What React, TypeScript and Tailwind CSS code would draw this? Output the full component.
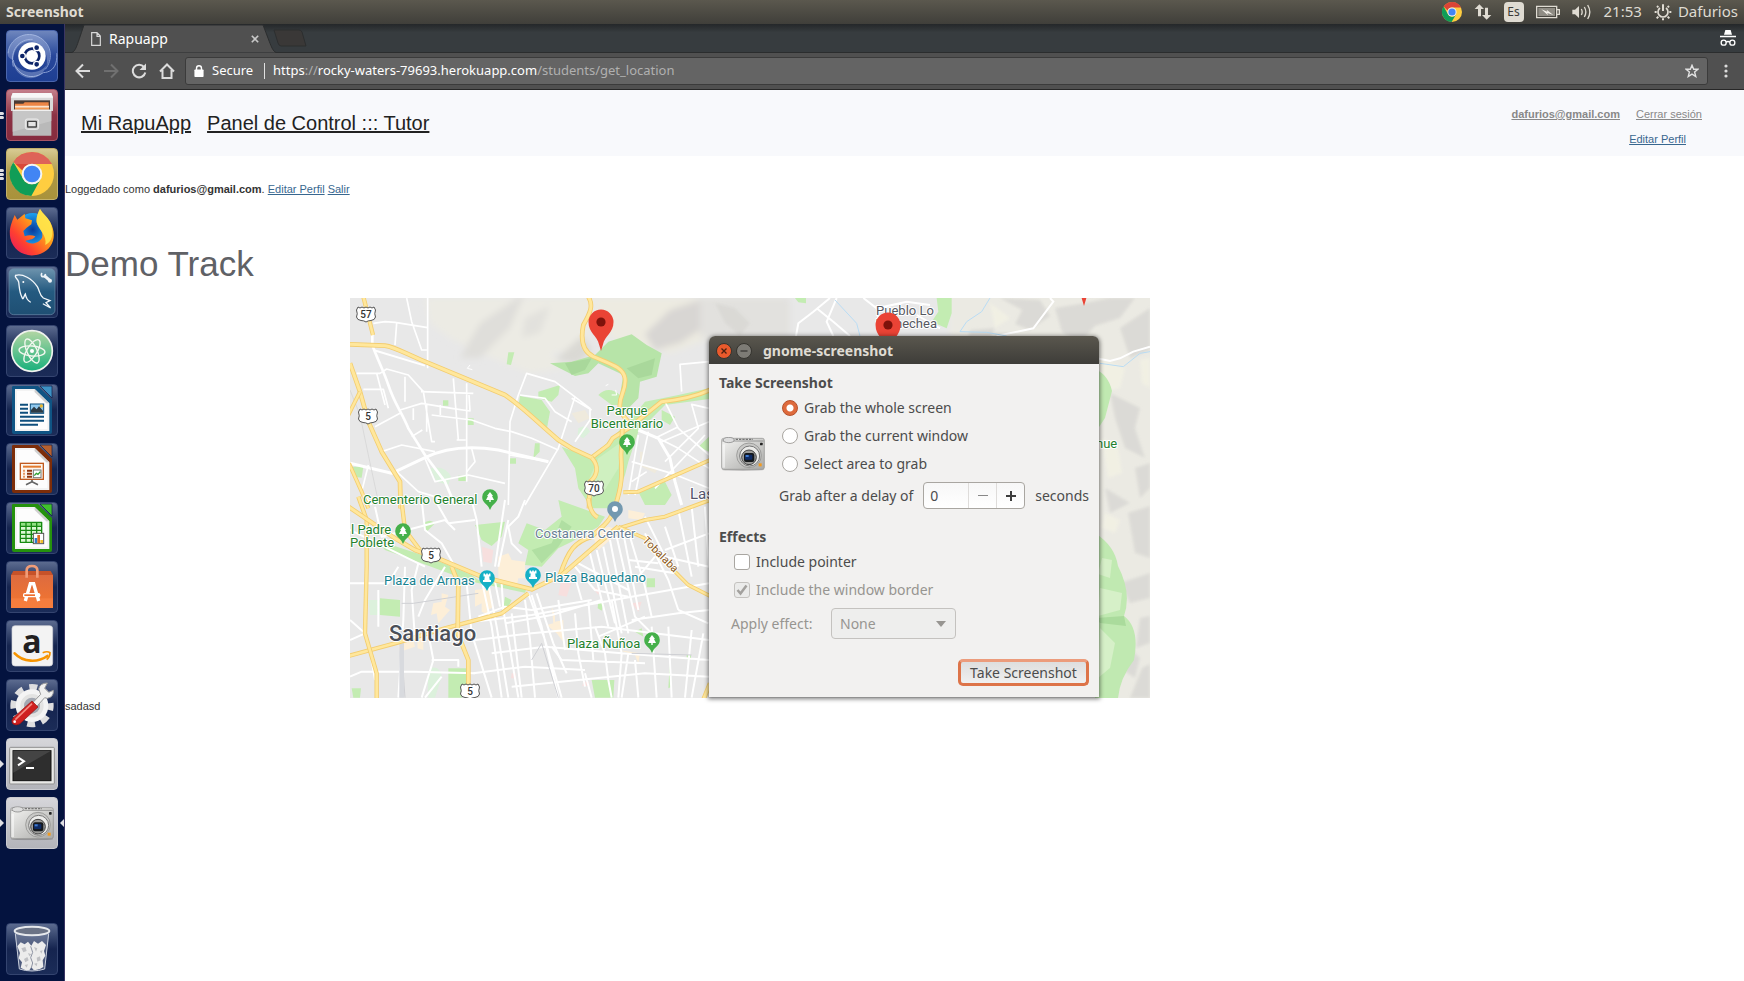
import type { ReactNode } from "react";

const UI = "font-['Noto_Sans','Open_Sans',sans-serif]";

function ChromeLogo({ className }: { className?: string }) {
  return (
    <svg viewBox="0 0 100 100" className={className} aria-hidden="true">
      <circle cx="50" cy="50" r="50" fill="#ffcd40" />
      <path d="M50 0A50 50 0 0 1 95 27H50A23 23 0 0 0 28 43L8 23A50 50 0 0 1 50 0Z" fill="#db4437" />
      <path d="M8 23A50 50 0 0 0 48 100L70 62 A23 23 0 0 1 30 61Z" fill="#0f9d58" />
      <circle cx="50" cy="50" r="23" fill="#f1f1f1" />
      <circle cx="50" cy="50" r="18" fill="#4285f4" />
    </svg>
  );
}

function CameraArt({ className }: { className?: string }) {
  return (
    <svg viewBox="0 0 132 102" className={className} aria-hidden="true">
      <defs>
        <linearGradient id="camBody" x1="0" y1="0" x2="1" y2="1">
          <stop offset="0" stopColor="#f4f4f2" />
          <stop offset="1" stopColor="#a9a9a7" />
        </linearGradient>
      </defs>
      <ellipse cx="66" cy="98" rx="64" ry="4" fill="#000" opacity=".2" />
      <rect x="2" y="4" width="128" height="93" rx="6" fill="url(#camBody)" stroke="#8b8b89" strokeWidth="2" />
      <path d="M4 12H128" stroke="#777" strokeWidth="2" />
      <path d="M44 7H96" stroke="#777" strokeWidth="4" strokeDasharray="7 3" />
      <ellipse cx="23" cy="9" rx="17" ry="8" fill="#ddd" stroke="#777" strokeWidth="2" />
      <rect x="4" y="22" width="8" height="70" fill="#fff" opacity=".5" />
      <circle cx="84" cy="55" r="37" fill="#c9c9c7" stroke="#858583" strokeWidth="2" />
      <circle cx="86" cy="57" r="30" fill="#ececea" stroke="#777" strokeWidth="3" />
      <circle cx="84" cy="61" r="22" fill="#9b9b99" stroke="#444" strokeWidth="3" />
      <rect x="69" y="48" width="31" height="27" rx="6" fill="#15181c" />
      <rect x="72" y="53" width="22" height="15" rx="3" fill="#0e2a63" />
      <rect x="74" y="54" width="9" height="6" fill="#3f7bd0" />
      <rect x="117" y="17" width="8" height="8" rx="2" fill="#222" />
      <rect x="113" y="79" width="9" height="9" fill="#f39a1d" />
    </svg>
  );
}

function OfficeSheet({ dark, light, children }: { dark: string; light: string; children: ReactNode }) {
  return (
    <>
      <path d="M22 6H96L138 48V144Q138 150 132 150H24Q18 150 18 144V10Q18 6 22 6Z" fill={dark} />
      <path d="M102 6H138V42Z" fill={light} stroke="#0a1a45" strokeWidth="2" />
      <path d="M27 15H86L130 58V141H27Z" fill="#f3f3f3" />
      <path d="M33 21H82L124 63V135H33Z" fill="#fdfdfd" />
      <path d="M86 15V24L121 58H130Z" fill="#cfcfcf" />
      {children}
    </>
  );
}

type Item = { name: string; bg: string; marks?: "two" | "three" | "arrow" | "both"; art: ReactNode };

const glass = "bg-linear-to-b from-[#5c6b8f] via-[#15244f] to-[#1b2c58] border-[#34446f]";
const pale = "bg-linear-to-b from-[#d6d6da] to-[#b3b4ba] border-[#c9cad0]";

const items: Item[] = [
  {
    name: "Search your computer",
    bg: "bg-linear-to-b from-[#6f86bd] via-[#28479a] to-[#1e3f93] border-[#4a66ad]",
    art: (
      <>
        <g fill="none" stroke="#a9bce6" opacity=".75">
          <path d="M6 70C8 28 60 -4 104 24C140 48 140 90 118 118" strokeWidth="3" />
          <path d="M22 110C10 60 40 26 80 28" strokeWidth="3" />
          <path d="M22 90C28 130 72 156 112 128C150 126 154 90 152 70" strokeWidth="3" />
        </g>
        <path d="M6 66C14 24 66 -6 108 26C140 56 134 88 122 108C130 60 98 30 66 34C38 38 22 62 22 90C4 84 4 74 6 66Z" fill="#bccbed" opacity=".35" />
        <path d="M20 92C40 132 96 138 122 106C112 140 76 156 46 136C30 124 22 108 20 92Z" fill="#dbe4f8" opacity=".3" />
        <circle cx="78" cy="78" r="41" fill="#fff" />
        <circle cx="78" cy="78" r="22" fill="none" stroke="#0d2468" strokeWidth="8" />
        <g fill="#0d2468" stroke="#fff" strokeWidth="4">
          <circle cx="49" cy="78" r="9" />
          <circle cx="92" cy="53" r="9" />
          <circle cx="92" cy="103" r="9" />
        </g>
      </>
    ),
  },
  {
    name: "Files",
    bg: "bg-linear-to-b from-[#c47f8b] via-[#8c3245] to-[#862b3e] border-[#a85564]",
    marks: "two",
    art: (
      <>
        <path d="M20 12H136L141 24V66H15V24Z" fill="#d9d9d9" />
        <path d="M20 12H136L141 26H15Z" fill="#f7f7f7" />
        <rect x="24" y="34" width="108" height="32" fill="#4a3a33" />
        <path d="M27 44H52L56 40H128V66H27Z" fill="#ed8545" />
        <path d="M27 50H129V56H27Z" fill="#fbe3cd" />
        <path d="M27 56H129V66H27Z" fill="#f39a55" />
        <path d="M20 62H136V140H20Z" fill="#b9b9b9" />
        <path d="M20 62H136V96L20 128Z" fill="#c6c6c6" />
        <path d="M20 64H136" stroke="#efefef" strokeWidth="4" />
        <rect x="58" y="90" width="40" height="31" rx="6" fill="#d2d2d2" stroke="#ececec" strokeWidth="3" />
        <rect x="65" y="97" width="26" height="17" rx="1" fill="#e4e4e4" stroke="#444" strokeWidth="4" />
      </>
    ),
  },
  {
    name: "Google Chrome",
    bg: "bg-linear-to-b from-[#d8cb93] via-[#ad9744] to-[#a9923b] border-[#c2b06a]",
    marks: "three",
    art: (
      <>
        <circle cx="78" cy="78" r="66" fill="#ffcd40" />
        <path d="M78 12A66 66 0 0 1 138 48H78A30 30 0 0 0 50 68L22 42A66 66 0 0 1 78 12Z" fill="#d9483b" />
        <path d="M22 42A66 66 0 0 0 76 144L104 93A30 30 0 0 1 50 90Z" fill="#109d57" />
        <path d="M78 12A66 66 0 0 1 138 48H18A66 66 0 0 1 78 12Z" fill="#fff" opacity=".15" />
        <circle cx="78" cy="78" r="31" fill="#f5f5f5" />
        <circle cx="78" cy="78" r="25" fill="#4285f4" />
      </>
    ),
  },
  {
    name: "Firefox",
    bg: glass,
    art: (
      <>
        <defs>
          <linearGradient id="foxFire" x1="1" y1="0" x2="0" y2="1">
            <stop offset="0" stopColor="#ffe23a" />
            <stop offset=".4" stopColor="#ff9a1a" />
            <stop offset=".7" stopColor="#ff4030" />
            <stop offset="1" stopColor="#e0106a" />
          </linearGradient>
          <radialGradient id="foxGlobe">
            <stop offset="0" stopColor="#0a3a9b" />
            <stop offset="1" stopColor="#1ba2f2" />
          </radialGradient>
        </defs>
        <circle cx="80" cy="68" r="50" fill="url(#foxGlobe)" />
        <path d="M26 24L34 38L56 20L58 34L78 40L76 52L62 62L52 72L56 88C66 84 78 84 88 88C82 100 64 98 58 102C74 116 100 108 108 92C114 72 96 60 92 46C90 28 98 14 102 6C110 20 122 28 132 44C154 82 144 124 104 140C64 156 22 134 13 94C9 70 12 58 26 24Z" fill="url(#foxFire)" />
        <path d="M102 6C110 20 122 28 132 44C146 80 138 104 118 114C124 84 96 68 92 46C90 28 98 14 102 6Z" fill="#ffe94e" opacity=".85" />
      </>
    ),
  },
  {
    name: "MySQL Workbench",
    bg: glass,
    art: (
      <>
        <defs>
          <linearGradient id="sqlBg" x1="0" y1="0" x2="0" y2="1">
            <stop offset="0" stopColor="#6d93ad" />
            <stop offset=".5" stopColor="#245a80" />
            <stop offset="1" stopColor="#1f4f73" />
          </linearGradient>
        </defs>
        <rect x="9" y="8" width="138" height="138" rx="14" fill="url(#sqlBg)" stroke="#6d8dab" strokeWidth="2" />
        <g fill="none" stroke="#f2f7fb" strokeWidth="4" strokeLinecap="round">
          <path d="M29 28C50 22 78 38 94 62C102 76 100 88 112 96L132 104L120 110L134 126L112 114" />
          <path d="M29 28C24 34 36 38 38 48C40 62 40 80 48 94C52 106 54 88 58 84C60 96 66 104 73 108" />
        </g>
        <circle cx="52" cy="48" r="3" fill="#fff" />
        <path d="M114 28L132 44" stroke="#eef4f8" strokeWidth="9" />
        <circle cx="112" cy="26" r="6" fill="none" stroke="#eef4f8" strokeWidth="5" strokeDasharray="28 10" strokeDashoffset="-32" />
        <circle cx="132" cy="44" r="6" fill="#eef4f8" />
      </>
    ),
  },
  {
    name: "Atom",
    bg: glass,
    art: (
      <>
        <defs>
          <linearGradient id="atomBg" x1="0" y1="0" x2="0" y2="1">
            <stop offset="0" stopColor="#b4d6a4" />
            <stop offset="1" stopColor="#18b07b" />
          </linearGradient>
        </defs>
        <circle cx="78" cy="78" r="61" fill="url(#atomBg)" stroke="#f0f3ee" strokeWidth="5" />
        <g fill="none" stroke="#f2f7ef" strokeWidth="4">
          <ellipse cx="78" cy="78" rx="39" ry="15" transform="rotate(5 78 78)" />
          <ellipse cx="78" cy="78" rx="39" ry="15" transform="rotate(65 78 78)" />
          <ellipse cx="78" cy="78" rx="39" ry="15" transform="rotate(122 78 78)" />
        </g>
        <circle cx="78" cy="78" r="6" fill="#fff" />
      </>
    ),
  },
  {
    name: "LibreOffice Writer",
    bg: glass,
    art: (
      <OfficeSheet dark="#0f5484" light="#3d91c4">
        <path d="M42 62H66M42 74H66M42 86H66M42 98H114M42 110H114M42 122H96" stroke="#0f4f7d" strokeWidth="6" />
        <rect x="73" y="60" width="40" height="28" fill="#8fc8ee" stroke="#0f4f7d" strokeWidth="3" />
        <circle cx="106" cy="66" r="5" fill="#ecb62e" />
        <path d="M75 86V78L84 68L92 76L99 67L111 80V86Z" fill="#2d3b44" />
      </OfficeSheet>
    ),
  },
  {
    name: "LibreOffice Impress",
    bg: glass,
    art: (
      <OfficeSheet dark="#7d2d09" light="#b6602f">
        <rect x="43" y="61" width="69" height="48" fill="#fdf6ef" stroke="#c05a1f" strokeWidth="4" />
        <path d="M51 71H105" stroke="#e27a2e" strokeWidth="6" />
        <path d="M51 83H57M51 92H57M51 101H57" stroke="#e79a66" strokeWidth="6" />
        <path d="M63 83H78M63 92H78M63 101H78" stroke="#8e350e" strokeWidth="6" />
        <rect x="82" y="81" width="23" height="23" fill="#fff" stroke="#777" strokeWidth="3" />
        <path d="M85 98L91 91L96 94L103 86" stroke="#2fa032" strokeWidth="4" fill="none" />
        <path d="M78 111V116L60 125M78 116L96 125" stroke="#666" strokeWidth="5" fill="none" />
      </OfficeSheet>
    ),
  },
  {
    name: "LibreOffice Calc",
    bg: glass,
    art: (
      <OfficeSheet dark="#25920d" light="#3fc22b">
        <rect x="42" y="60" width="66" height="62" fill="#dcf8d4" />
        <path d="M42 60H108V72H42Z" fill="#5fcf4d" opacity=".6" />
        <path d="M43 60V122M60 60V122M76 60V122M92 60V122M107 60V122M42 61H108M42 73H108M42 85H108M42 97H108M42 109H108M42 121H108" stroke="#178a12" strokeWidth="4" />
        <rect x="82" y="94" width="31" height="31" fill="#fff" stroke="#555" strokeWidth="3" />
        <path d="M90 123V108" stroke="#2e7cc9" strokeWidth="8" />
        <path d="M98 123V99" stroke="#dd6f25" strokeWidth="8" />
        <path d="M107 123V114" stroke="#f0c02c" strokeWidth="8" />
      </OfficeSheet>
    ),
  },
  {
    name: "Ubuntu Software",
    bg: glass,
    art: (
      <>
        <defs>
          <linearGradient id="bagBg" x1="0" y1="0" x2="0" y2="1">
            <stop offset="0" stopColor="#dd6b3f" />
            <stop offset="1" stopColor="#f4762f" />
          </linearGradient>
        </defs>
        <path d="M22 30H134L141 42H15Z" fill="#c65229" />
        <path d="M15 42H141V141H15Z" fill="url(#bagBg)" />
        <path d="M15 112H141V141H15Z" fill="#f9854a" opacity=".5" />
        <path d="M62 50V28Q62 15 78 15T94 28V50" fill="none" stroke="#f09c78" strokeWidth="8" />
        <path d="M58 120L73 68H83L98 120M62 102H94" fill="none" stroke="#fff" strokeWidth="10" />
        <rect x="51" y="96" width="52" height="13" rx="5" fill="#fff" />
        <rect x="55" y="100" width="32" height="5" fill="#ef6d2c" />
      </>
    ),
  },
  {
    name: "Amazon",
    bg: glass,
    art: (
      <>
        <rect x="18" y="17" width="122" height="121" rx="9" fill="#f3f3f3" stroke="#d3d4da" strokeWidth="2" />
        <text x="78" y="99" textAnchor="middle" fontSize="96" fontWeight="700" fill="#221f1f" fontFamily="Open Sans, sans-serif">a</text>
        <path d="M26 100C52 128 96 128 124 108" fill="none" stroke="#f79400" strokeWidth="8" strokeLinecap="round" />
        <path d="M110 98C120 94 128 95 132 98C132 106 128 114 122 119" fill="none" stroke="#f79400" strokeWidth="5" />
      </>
    ),
  },
  {
    name: "System Settings",
    bg: glass,
    art: (
      <>
        <circle cx="78" cy="80" r="56" fill="none" stroke="#dededf" strokeWidth="18" strokeDasharray="24 20" strokeDashoffset="10" />
        <circle cx="78" cy="80" r="42" fill="#e3e3e2" stroke="#f4f4f4" strokeWidth="14" />
        <circle cx="78" cy="80" r="24" fill="#a3a8b2" />
        <path d="M66 86L104 46L98 30Q102 12 124 12L116 28L128 40L142 34Q144 54 124 58L116 56L78 98Z" fill="#f0f0ef" stroke="#9a9a9a" strokeWidth="3" />
        <path d="M78 66L96 84L42 134Q30 142 20 134Q14 126 22 116Z" fill="#cf2020" stroke="#8e1212" strokeWidth="2" />
        <path d="M78 74L28 122" stroke="#f38a80" strokeWidth="5" />
        <circle cx="26" cy="128" r="4" fill="#fff" />
      </>
    ),
  },
  {
    name: "Terminal",
    bg: pale,
    marks: "arrow",
    art: (
      <>
        <rect x="11" y="28" width="134" height="110" rx="3" fill="#e9e9e7" stroke="#8f8f8f" strokeWidth="3" />
        <rect x="21" y="38" width="114" height="90" fill="#2e2e2e" stroke="#111" strokeWidth="3" />
        <path d="M22 39H134L22 104Z" fill="#444" />
        <path d="M36 58L54 70L36 82" fill="none" stroke="#fff" strokeWidth="6" />
        <path d="M60 90H84" stroke="#fff" strokeWidth="6" />
      </>
    ),
  },
  {
    name: "Camera",
    bg: pale,
    marks: "both",
    art: (
      <svg x="12" y="28" width="132" height="102">
        <CameraArt />
      </svg>
    ),
  },
];

const trash: Item = {
  name: "Trash",
  bg: glass,
  art: (
    <>
      <path d="M26 28H130L116 138Q78 150 40 138Z" fill="#c9d0de" opacity=".3" />
      <path d="M34 70L44 58L56 64L66 56L76 68L84 54L96 62L108 54L120 66L114 84L118 98L110 112L112 132Q96 144 82 140L76 132L70 142Q54 142 44 134L48 118L38 106L42 90Z" fill="#ececec" />
      <path d="M46 76L58 72L62 84L52 88ZM84 72L94 76L90 86ZM54 108L64 102L68 112L58 118ZM92 104L102 100L104 112L94 116ZM66 90L76 94L70 100ZM84 122L94 120L92 130ZM56 126L66 124L62 134ZM102 84L110 82L106 92Z" fill="#bfc0c4" />
      <path d="M74 70L80 88L74 104L80 120L76 134" fill="none" stroke="#8d93a3" strokeWidth="3" />
      <ellipse cx="78" cy="24" rx="52" ry="13" fill="#6b7386" stroke="#e6e8ec" strokeWidth="6" />
      <path d="M28 32L40 138Q78 150 116 138L128 32" fill="none" stroke="#c8cedb" strokeWidth="3" />
    </>
  ),
};

function Tile({ item }: { item: Item }) {
  return (
    <li className="relative pl-1.5">
      {(item.marks === "two" || item.marks === "three") && (
        <span className="absolute left-0 top-0 flex h-full flex-col justify-center gap-px">
          <span className="h-[3px] w-1 rounded-r-sm bg-[#dfdfe3]" />
          <span className="h-[3px] w-1 rounded-r-sm bg-[#dfdfe3]" />
          {item.marks === "three" && <span className="h-[3px] w-1 rounded-r-sm bg-[#dfdfe3]" />}
        </span>
      )}
      {(item.marks === "arrow" || item.marks === "both") && (
        <svg viewBox="0 0 4 8" className="absolute left-0 top-[22px] h-2 w-1" aria-hidden="true">
          <path d="M0 0L4 4L0 8Z" fill="#dfdfe3" />
        </svg>
      )}
      {item.marks === "both" && (
        <svg viewBox="0 0 4 8" className="absolute right-0 top-[22px] h-2 w-1" aria-hidden="true">
          <path d="M4 0L0 4L4 8Z" fill="#dfdfe3" />
        </svg>
      )}
      <button type="button" aria-label={item.name} className={`block size-[52px] rounded-[4px] border ${item.bg}`}>
        <svg viewBox="3 3 150 150" className="size-full overflow-visible" aria-hidden="true">{item.art}</svg>
      </button>
    </li>
  );
}

function TopBar() {
  return (
    <header className={`${UI} flex h-6 shrink-0 items-center bg-linear-to-b from-[#5b584e] to-[#403f3a] px-1.5 text-sm text-[#dfdbd2]`}>
      <span className="font-bold">Screenshot</span>
      <div className="ml-auto flex items-center">
        <ChromeLogo className="mr-3 size-5" />
        <svg viewBox="0 0 54 54" className="mr-3 size-[18px]" fill="#dfdbd2" aria-hidden="true">
          <path d="M16 4L30 18H21V40H12V18H2ZM38 50L24 36H33V14H42V36H52Z" />
        </svg>
        <span className="mr-3 flex size-5 items-center justify-center rounded-sm bg-[#dfdbd2] text-[12px] text-[#3c3b37]">Es</span>
        <svg viewBox="0 0 72 42" className="mr-3 h-3.5 w-6" fill="none" aria-hidden="true">
          <path d="M2 4H62V38H2ZM62 14H70V28H62" stroke="#dfdbd2" strokeWidth="4" />
          <rect x="7" y="9" width="50" height="24" fill="#8f8c84" />
          <path d="M16 13L34 20L32 14L52 30L34 24L36 31Z" fill="#f2efe8" />
        </svg>
        <svg viewBox="0 0 60 54" className="mr-3 h-[18px] w-5" fill="none" stroke="#dfdbd2" strokeWidth="4" aria-hidden="true">
          <path d="M1 20H9L21 9V45L9 34H1Z" fill="#dfdbd2" stroke="none" />
          <path d="M28 18Q33 27 28 36M37 12Q46 27 37 42M47 6Q60 27 47 48" />
        </svg>
        <time className="mr-3 text-[15px]">21:53</time>
        <svg viewBox="0 0 54 54" className="mr-1.5 size-[18px]" fill="none" stroke="#dfdbd2" aria-hidden="true">
          <path d="M18 15A15 15 0 1 0 36 15" strokeWidth="5" />
          <path d="M27 4V24M46 27H52M2 27H8M41 41L46 46M13 41L8 46M41 13L45 9M13 13L9 9M27 46V52" strokeWidth="6" />
        </svg>
        <span className="text-[15px]">Dafurios</span>
      </div>
    </header>
  );
}

function BrowserChrome() {
  return (
    <div className={`${UI} text-white`}>
      <div className="flex h-[29px] items-stretch border-b border-[#2b2d2e] bg-linear-to-b from-[#242729] via-[#373c3f] via-30% to-[#373c3f]">
        <div className="relative ml-1.5 flex w-[206px] items-center pl-5 pt-0.5">
          <svg viewBox="0 0 206 29" preserveAspectRatio="none" className="absolute inset-x-0 top-0 h-[29px] w-full" aria-hidden="true">
            <path d="M0 29C5 27 5 24 13 1H192C201 24 201 27 206 29Z" fill="#505050" stroke="#2b2d2e" />
          </svg>
          <svg viewBox="0 0 30 42" className="relative h-3.5 w-2.5" fill="none" stroke="#d8d8d8" strokeWidth="3.5" aria-hidden="true">
            <path d="M2 2H18L28 12V40H2ZM18 2V13H28" />
          </svg>
          <span className="relative ml-2 text-sm">Rapuapp</span>
          <button type="button" aria-label="Close tab" className="relative ml-auto mr-[18px]">
            <svg viewBox="0 0 10 10" className="size-2" stroke="#c8c8c8" strokeWidth="2" aria-hidden="true">
              <path d="M1 1L9 9M9 1L1 9" />
            </svg>
          </button>
        </div>
        <button type="button" aria-label="New tab" className="-ml-1 self-center">
          <svg viewBox="0 0 34 18" className="h-[18px] w-[34px]" aria-hidden="true">
            <path d="M1 1H26Q28 1 29 3L33 17H8Q6 17 5 14Z" fill="#3a3837" stroke="#2c2e2f" />
          </svg>
        </button>
        <svg viewBox="0 0 48 48" className="ml-auto mr-2 size-4 self-center" aria-hidden="true">
          <path d="M12 14L16 0H32L36 14ZM0 17H48V22H0Z" fill="#fff" />
          <circle cx="11" cy="38" r="7.5" fill="none" stroke="#fff" strokeWidth="4" />
          <circle cx="37" cy="38" r="7.5" fill="none" stroke="#fff" strokeWidth="4" />
          <path d="M18 37Q24 32 30 37" fill="none" stroke="#fff" strokeWidth="4" />
        </svg>
      </div>
      <div className="flex h-[37px] items-center border-b border-[#272727] bg-[#505050] pl-2.5 pr-2">
        <button type="button" aria-label="Back" className="mr-3">
          <svg viewBox="0 0 16 16" className="size-4" fill="none" stroke="#dcdcdc" strokeWidth="2" aria-hidden="true"><path d="M15 8H2M8 1.5L1.5 8L8 14.5" /></svg>
        </button>
        <button type="button" aria-label="Forward" className="mr-3">
          <svg viewBox="0 0 16 16" className="size-4" fill="none" stroke="#707070" strokeWidth="2" aria-hidden="true"><path d="M1 8H14M8 1.5L14.5 8L8 14.5" /></svg>
        </button>
        <button type="button" aria-label="Reload" className="mr-3">
          <svg viewBox="0 0 16 16" className="size-4" aria-hidden="true"><path d="M13 4A6.3 6.3 0 1 0 14.3 9.5" fill="none" stroke="#dcdcdc" strokeWidth="2" /><path d="M15 .5V7H8.500Z" fill="#dcdcdc" /></svg>
        </button>
        <button type="button" aria-label="Home" className="mr-2.5">
          <svg viewBox="0 0 16 16" className="size-4" fill="none" stroke="#dcdcdc" strokeWidth="2" aria-hidden="true"><path d="M1 8.500L8 1.500L15 8.500M3.500 7V15H12.500V7" /></svg>
        </button>
        <div className="flex h-7 flex-1 items-center rounded-[3px] border border-[#3b3b3b] bg-[#646464] px-2 text-[13px]">
          <svg viewBox="0 0 26 34" className="mr-2 h-3 w-[10px]" aria-hidden="true">
            <rect y="13" width="26" height="21" rx="2" fill="#fff" />
            <path d="M6 14V9Q6 2 13 2T20 9V14" fill="none" stroke="#fff" strokeWidth="4" />
          </svg>
          <span className="w-[44px]">Secure</span>
          <span className="mx-2 h-4 w-px bg-[#e0e0e0]" />
          <p className="flex-1 text-[#b0b0b0]">
            <span className="text-white">https</span>://<span className="text-white">rocky-waters-79693.herokuapp.com</span>/students/get_location
          </p>
          <button type="button" aria-label="Bookmark">
            <svg viewBox="0 0 16 16" className="size-3.5" fill="none" stroke="#e2e2e2" strokeWidth="1.600" aria-hidden="true">
              <path d="M8 1.500L9.900 6H14.800L11 9.200L12.300 14.300L8 11.500L3.700 14.300L5 9.200L1.200 6H6.100Z" />
            </svg>
          </button>
        </div>
        <button type="button" aria-label="Menu" className="ml-4 mr-2">
          <svg viewBox="0 0 4 14" className="h-3.5 w-1" fill="#dcdcdc" aria-hidden="true">
            <circle cx="2" cy="2" r="1.600" /><circle cx="2" cy="7" r="1.600" /><circle cx="2" cy="12" r="1.600" />
          </svg>
        </button>
      </div>
    </div>
  );
}

function Road({ d, w = 9 }: { d: string; w?: number }) {
  return (
    <>
      <path d={d} fill="none" stroke="#f3cd6f" strokeWidth={w + 5} strokeLinejoin="round" />
      <path d={d} fill="none" stroke="#ffe79c" strokeWidth={w} strokeLinejoin="round" />
    </>
  );
}

function Pin({ x, y, color, kind }: { x: number; y: number; color: string; kind: "tree" | "tower" | "dot" }) {
  return (
    <g transform={`translate(${x} ${y})`}>
      <path d="M0 13L-1.500 10C-3 7-7.800 5.500-7.800 0A7.800 7.800 0 0 1 7.800 0C7.800 5.500 3 7 1.500 10Z" fill={color} />
      {kind === "tree" && <path d="M0-5L3-1H2L4 3H.7V5H-.7V3H-4L-2-1H-3Z" fill="#fff" />}
      {kind === "tower" && <path d="M-3.500-4.500H-2V-3.500H-.8V-4.500H.8V-3.500H2V-4.500H3.500V-1.500H2.200L2.700 2H4V4H-4V2H-2.700L-2.200-1.500H-3.500Z" fill="#fff" />}
      {kind === "dot" && <circle r="3" fill="#fff" />}
    </g>
  );
}

function RedPin({ x, y }: { x: number; y: number }) {
  return (
    <g transform={`translate(${x} ${y})`}>
      <path d="M0 29L-1.800 23C-4 13-12.500 11-12.500 0A12.500 12.500 0 0 1 12.500 0C12.500 11 4 13 1.800 23Z" fill="#ea4335" />
      <circle r="4.600" fill="#7d120b" />
    </g>
  );
}

function Shield({ x, y, n }: { x: number; y: number; n: string }) {
  return (
    <g transform={`translate(${x} ${y})`}>
      <path d="M-8-7Q-6-5-4-7Q-2-5 0-7Q2-5 4-7Q6-5 8-7L9.500-4Q8 0 9.500 3Q9 6 5 6.500Q2 6.500 0 8Q-2 6.500-5 6.500Q-9 6-9.500 3Q-8 0-9.500-4Z" fill="#fff" stroke="#555" />
      <text y="4" textAnchor="middle" fontSize="10" fontWeight="500" fill="#333">{n}</text>
    </g>
  );
}

const halo = { paintOrder: "stroke" as const, stroke: "#fff", strokeWidth: 2, strokeLinejoin: "round" as const };

function CityMap() {
  return (
    <svg viewBox="0 0 800 400" className="block h-[400px] w-[800px]" fontFamily="Roboto, sans-serif" role="img" aria-label="Map">
      <defs>
        <filter id="soft" x="-10%" y="-10%" width="120%" height="120%"><feGaussianBlur stdDeviation="3" /></filter>
        <filter id="softer" x="-10%" y="-10%" width="120%" height="120%"><feGaussianBlur stdDeviation="1.500" /></filter>
      </defs>
      <rect width="800" height="400" fill="#e8e8e8" />

      {/* hills */}
      <g filter="url(#soft)">
        <path d="M75 0H245L235 50L200 55L215 70L180 75L130 55L100 40L80 25Z" fill="#ecebe4" />
        <path d="M110 60L130 25L175 -5L160 30L130 60Z" fill="#dfdeda" />
        <path d="M175 20L200 8L190 35L172 40Z" fill="#e2e1dd" />
        <path d="M245 0H360V40L320 55L270 45L250 30Z" fill="#edebe1" />
        <path d="M295 36L320 12L350 2L360 25L330 45L305 52Z" fill="#d8d6d3" />
        <path d="M205 62L232 38L242 52L228 66Z" fill="#dad9d4" />
        <path d="M350 0H440V40H350Z" fill="#e2e1de" />
        <path d="M600 -10H810V410H745V60L600 40Z" fill="#ebeae3" />
      </g>
      <g fill="#d9d8d4" opacity=".85" filter="url(#softer)">
        <path d="M650 0L690 2L700 18L680 32L665 26L672 12ZM705 10L735 5L760 0H785L770 20L745 28L730 45L712 34ZM770 30L800 10V52L780 60ZM760 95L790 110L785 130L795 160L775 150L765 120ZM785 170L800 165V190L790 200ZM755 190L780 205L760 215ZM778 215L800 208V260L785 255ZM770 285L800 275V300L780 305ZM790 320L800 318V345L786 350ZM775 345L790 360L785 380L770 370ZM792 370L800 366V400H780Z" />
        <path d="M365 5L385 10L400 25L390 38L375 25ZM620 32L645 30L640 40H618Z" />
      </g>
      <g fill="#f2f1e4" opacity=".9" filter="url(#softer)">
        <path d="M750 60L775 70L770 90L750 95ZM752 140L768 150L772 175L758 180ZM755 215L770 222L765 235L752 230ZM640 5L660 20L645 30ZM790 62L800 60V90L792 85Z" />
      </g>
      <path d="M742 70Q758 75 762 93L755 120L745 135ZM745 235Q765 248 768 268Q782 295 774 318Q790 330 784 362Q770 380 768 400H745Z" fill="#c0e9b1" />
      <path d="M750 290L772 295L770 312L748 318ZM750 330L765 345L760 370L748 380ZM752 260L762 262L760 280L748 276Z" fill="#d6f0c8" />
      <path d="M746 320L774 318L776 328L750 325Z" fill="#aadb9c" />

      {/* north-west quarter */}
      <g transform="translate(-5 -3) scale(.33333)">
        <g fill="#c3ecb2">
          <path d="M615 205L680 200L750 180L790 140L860 118L905 150L950 175L935 245L885 260L880 310L830 360L825 300L835 240L760 205L730 235L690 243Z" fill="#b7e4a8" />
          <path d="M660 205L740 190L720 225L680 240ZM845 220L930 190L920 240L880 250Z" fill="#a9d89b" />
          <path d="M525 303L590 315L615 350L605 405L520 335ZM580 290L645 270L640 300L620 320L580 310ZM490 172L508 172L498 210L485 208ZM760 300Q790 270 825 300L830 330H800ZM294 316H310V332H294ZM368 370H386V390H368ZM15 515L55 515L50 548L25 545ZM340 542H364V558H340ZM495 490H513V506H495ZM570 445H584V470L565 490Z" />
          <path d="M650 455L740 490L800 430L860 370L900 320L1000 300L1092 280L1092 312L960 330L880 410L850 500L840 540L800 640L740 640L700 580L690 520Z" />
          <path d="M950 345L990 365L975 390L950 375ZM1092 425L1060 455L1092 470ZM880 590L960 560L980 600L960 630L900 630Z" />
          <path d="M700 400Q725 385 735 410L715 430L698 420ZM255 520Q300 510 318 545L310 570L275 560Z" fill="#dcf1dc" />
        </g>
        <path d="M760 490L830 440L820 520L770 600L720 580Z" fill="#cff0c0" />
        <path d="M680 355L720 345L735 370L700 385ZM885 470H893V500H885ZM880 510L940 520L930 535Z" fill="#efeadd" />
        <g fill="none" stroke="#fff" strokeWidth="5" strokeLinejoin="round">
          <path d="M185 9L200 80L230 165H250M248 9V220M85 85L120 80L150 82L248 98M155 85L150 150M35 235H105L125 222L190 240L235 290L260 440H270M180 245V320M228 290L385 295M165 345L230 325L320 340L375 348L372 300M260 360L380 375L450 400L500 410L560 430L640 465M90 395L165 355M245 330V410M325 250L340 435M365 265V560M335 435H362M200 425L232 405M55 283H115L130 340M95 235L120 330M286 330V360M205 340V375" />
          <path d="M490 630L495 380L520 300L545 235L630 260L735 340L735 375L690 440M525 300L600 310L630 350L680 380M690 305L640 460L540 630M610 500L495 480M680 310L740 345" />
          <path d="M1092 200L1005 208L1010 290M960 320L1000 400L1092 480M1092 340L1040 328L1060 400L960 500M1092 380L950 440M860 500L980 535L1092 580M1000 395L930 430M880 420L850 600M910 410L870 600M1080 420L930 580M905 530L860 560M940 430L1000 460L1092 520" />
          <path d="M155 530L220 590L320 620M240 490L270 560L370 540L480 565M380 460L390 500L365 530M70 510L50 590L80 630M110 470L170 450L270 470" />
          <path d="M375 210L367 220L382 224M790 268L782 272M800 300L815 300L812 285" strokeWidth="3" />
        </g>
        <g fill="none" stroke="#fff" strokeWidth="9" strokeLinejoin="round">
          <path d="M82 120V150C100 200 115 225 130 270C150 330 170 350 190 400L240 480L300 560L330 630" strokeWidth="8" />
          <path d="M15 505L140 535L240 488C300 458 380 452 460 465L610 500M880 405L940 430L975 490L990 560L1010 630" />
          <path d="M85 165L240 212" strokeWidth="6" />
        </g>
        <path d="M15 285L45 360L70 480L100 620" stroke="#d2d2d2" strokeWidth="2" fill="none" />
        <Road d="M55 5L84 120" w={8} />
        <Road d="M15 205L45 290L70 380L110 470L165 560L167 640" />
        <Road d="M45 290L10 360" w={7} />
        <Road d="M12 505L50 590L70 640" w={7} />
        <Road d="M730 5C745 30 738 50 715 90C705 140 715 170 745 185C790 205 835 215 840 250C845 290 820 300 825 340C830 370 860 380 860 400" />
        <Road d="M740 488L790 450L803 430L850 400L950 320C1000 315 1050 305 1095 285" />
        <Road d="M832 400L828 480C830 530 835 560 810 635" />
        <Road d="M835 592L880 590L970 550L1095 495" w={7} />
        <Road d="M740 488C765 515 755 545 735 560L732 640" />
        <Road d="M12 148L120 152C150 156 180 175 240 200L480 300C510 320 540 345 600 400L640 435L680 460L740 488" />
      </g>

      {/* south-west quarter */}
      <g transform="translate(-5 202) scale(.33333)">
        <g fill="#c3ecb2">
          <path d="M640 0L780 50L760 80L680 125L640 145L590 200L540 195L550 150L520 130L545 70L600 90L650 50Z" />
          <path d="M560 150L620 130L650 60L680 80L640 140L590 190Z" fill="#b0dfa2" />
          <path d="M390 75L480 65L470 110L440 138L410 120ZM95 120L260 175L380 225L400 240L545 265L540 278L380 245L230 190L120 150ZM105 295L165 300L165 350L105 345ZM310 505H372L370 560L350 593H310ZM740 540H808L805 593H750ZM20 565H48L45 593H25ZM235 70Q255 55 270 70L245 95ZM760 300L775 310L770 332L758 325ZM480 290L500 300L490 320L475 325ZM870 395L890 385L895 410ZM1025 465H1038V478H1025ZM905 235H930V262H905ZM975 480L980 560L970 565Z" />
          <path d="M70 300H105V345H75ZM255 505Q285 495 290 530L270 593H250Q245 540 255 505Z" fill="#dcf1dc" />
        </g>
        <g fill="#fdefd8">
          <path d="M460 170L490 160L500 180L540 185V235H520L515 260L460 235ZM390 270L435 265L445 320L430 330V345L410 335V310L390 320ZM265 310L290 305V280L310 285L300 320L315 330L280 370L275 340L258 345ZM620 320L630 345V365L655 360V425L635 400L605 375L625 370ZM850 30L900 40L890 60L850 55ZM215 395L235 400V450L218 445ZM740 100L790 80L830 90L760 150ZM820 450L885 460L880 490L870 465ZM160 435L205 420L210 440L165 455Z" />
        </g>
        <path d="M410 140L445 150L440 190L415 185ZM650 235L680 245L665 290L640 285ZM740 260L765 268L760 285ZM860 310L890 305L880 335ZM500 520H512V535H498ZM715 545H732V558H712Z" fill="#f7dfde" />
        <g fill="none" stroke="#fff" strokeWidth="6" strokeLinejoin="round">
          <path d="M230 0L240 90L290 130L330 200M380 0L395 60L410 200M270 0L310 70L390 60M90 20L110 110L300 60L330 90M480 0L450 200M490 60L460 200M540 0L520 50L490 80L500 130L530 160M15 90L220 190L240 200M15 250H130L160 200M60 250V300M15 360L60 400" />
          <path d="M410 240L440 380L470 593M430 250L455 380L490 593M450 245L465 320M470 250L475 330L520 593M365 250L380 400L440 593M550 280L600 420L650 593M575 280L625 430L665 520M560 285L590 380L640 593M540 300L555 420L570 593M500 340L530 593M300 200L240 300L220 350M220 190L200 270L210 420M180 200L175 360L160 593M260 480H340V500M100 380L100 270" />
          <path d="M345 370L560 345L860 290L1092 250M480 370L620 345L770 300M390 420L560 400L770 380L1092 420M440 460L600 440L830 460L1092 480M385 520L540 500L720 510M500 560L900 520L1092 530M620 440L650 480L900 490M720 520L740 593M690 340L700 460L720 560M640 300L660 450M730 300L745 480M750 380L780 460L790 540L800 593M800 300L830 460L820 593M850 460L830 593M870 480L880 593M920 380L935 593M970 380L980 593M1000 330L1090 370M1040 390L1020 593M1075 400L1040 593" />
          <path d="M735 160L790 380M755 150L810 370M775 140L830 400M795 120L850 400M815 110L870 350L920 400M835 100L880 330M855 110L900 260L920 350M690 200L750 270L850 290M700 190L850 270M690 230L710 300M900 100L970 240L1000 330M930 170L880 230M900 50L960 170L1092 200M960 80L1000 200M1000 30L1040 230M1040 20L1060 200M1092 100L960 150M1080 20L1092 200M860 360L1000 340L1092 330M760 410L900 350M870 200L990 220M850 180L940 190" />
          <path d="M15 530L50 515H210L390 520M80 480L90 540M250 400L265 480L230 593M15 420L60 400M290 530L240 593M400 350L480 320L560 330L740 300" />
        </g>
        <path d="M205 310L400 280M170 310L205 310M170 450L180 593M590 430L560 480M860 460L1040 465M590 430L640 593" stroke="#cfd0d4" strokeWidth="3" fill="none" />
        <path d="M170 390V593" stroke="#d8dade" strokeWidth="14" fill="none" />
        <Road d="M10 468L150 430L300 385L470 340L550 280" w={8} />
        <Road d="M40 -10L65 60L65 200L60 400L95 520V600" w={8} />
        <Road d="M168 -10L180 90L225 150" w={8} />
        <Road d="M320 200L340 250L338 400L370 480V600" />
        <Road d="M730 -5Q735 40 758 52" />
        <Road d="M645 225C670 150 690 125 740 110C770 80 790 70 800 45" />
        <Road d="M820 85L900 60L960 50L1095 0" w={7} />
        <Road d="M820 80L900 115L990 215L1030 255L1095 288" w={6} />
        <Road d="M1095 550L1075 600" w={9} />
        <Road d="M10 20L150 115L210 150L290 180L410 230L560 268L650 225L760 130L820 80" />
      </g>

      {/* north-east quarter */}
      <g transform="translate(350 -3) scale(.33333)">
        <path d="M285 9H318V25L295 22ZM710 9H755V55L740 100L695 80L715 50Z" fill="#c3ecb2" />
        <g fill="none" stroke="#fff" strokeWidth="8">
          <path d="M390 9L340 50L295 85L288 123M350 40L400 80L450 123M410 9L380 80L400 123M530 30L540 123M490 9L530 40L620 20L690 30" strokeWidth="6" />
          <path d="M890 123L1000 100L1060 20L1050 9M650 60L720 100M1190 190L1230 198L1260 190L1300 170L1350 155" strokeWidth="6" />
        </g>
        <path d="M405 15L470 85L480 123M870 9L845 50L800 80L780 110L860 112L920 123M1200 205L1270 215L1320 175L1350 170" stroke="#b9dcf4" strokeWidth="3" fill="none" />
      </g>

      <g fontSize="13" fill="#23812d" {...halo}>
        <text x="277" y="117" textAnchor="middle">Parque</text>
        <text x="277" y="130" textAnchor="middle">Bicentenario</text>
        <text x="13" y="206">Cementerio General</text>
        <text x="1" y="236">l Padre</text>
        <text x="0" y="249">Poblete</text>
        <text x="217" y="350">Plaza Ñuñoa</text>
        <text x="746" y="150">nue</text>
      </g>
      <g fontSize="13" fill="#178291" {...halo}>
        <text x="34" y="287">Plaza de Armas</text>
        <text x="195" y="284">Plaza Baquedano</text>
      </g>
      <text x="185" y="240" fontSize="13" fill="#6a7f95" {...halo}>Costanera Center</text>
      <text x="39" y="343" fontSize="22" fontWeight="500" fill="#4b4f58" {...halo}>Santiago</text>
      <text x="340" y="201" fontSize="15" fill="#55566b" {...halo}>Las</text>
      <g fontSize="13" fill="#55585f" {...halo}>
        <text x="555" y="17" textAnchor="middle">Pueblo Lo</text>
        <text x="587" y="30" textAnchor="end">Barnechea</text>
      </g>
      <text transform="translate(292 243) rotate(45)" fontSize="11" fill="#8c5a20" {...halo}>Tobalaba</text>

      <Shield x={16} y={16} n="57" />
      <Shield x={18} y={118} n="5" />
      <Shield x={244} y={190} n="70" />
      <Shield x={81} y={257} n="5" />
      <Shield x={120} y={393} n="5" />
      <Pin x={277} y={144} color="#45b04a" kind="tree" />
      <Pin x={140} y={199} color="#45b04a" kind="tree" />
      <Pin x={53} y={233} color="#45b04a" kind="tree" />
      <Pin x={302} y={342} color="#45b04a" kind="tree" />
      <Pin x={137} y={280} color="#16b0c6" kind="tower" />
      <Pin x={183} y={277} color="#16b0c6" kind="tower" />
      <Pin x={265} y={211} color="#7399b0" kind="dot" />
      <RedPin x={251} y={24} />
      <RedPin x={538} y={27} />
      <RedPin x={734} y={-21} />
    </svg>
  );
}

const link = "text-[#38678f] underline";

function WebPage() {
  return (
    <main className="flex-1 bg-white font-['Liberation_Sans',Arial,sans-serif] text-[11px] leading-4 text-[#333]">
      <div className="flex h-[66px] items-start justify-between bg-[#f8f9fc] pl-4 pr-[42px]">
        <nav className="flex gap-4 pt-[18px] text-xl leading-[30px] text-[#222]">
          <a href="#home" className="underline">Mi RapuApp</a>
          <a href="#panel" className="underline">Panel de Control ::: Tutor</a>
        </nav>
        <div className="flex flex-col items-end gap-[9px] pt-4">
          <div className="flex gap-4 text-[#888]">
            <a href="#account" className="font-bold underline">dafurios@gmail.com</a>
            <a href="#logout" className="underline">Cerrar sesión</a>
          </div>
          <a href="#edit" className={`${link} mr-4`}>Editar Perfil</a>
        </div>
      </div>
      <p className="mt-[25px]">
        Loggedado como <strong>dafurios@gmail.com</strong>. <a href="#edit" className={link}>Editar Perfil</a> <a href="#exit" className={link}>Salir</a>
      </p>
      <h1 className="mt-[46px] text-[35px] leading-[42px] text-[#5f6166]">Demo Track</h1>
      <div className="mt-[13px] pl-[285px]">
        <CityMap />
      </div>
      <p>sadasd</p>
    </main>
  );
}

const radio =
  "size-4 shrink-0 appearance-none rounded-full border border-[#a9a6a1] bg-white checked:border-[#b5502a] checked:bg-[radial-gradient(circle,#fff_0_3px,#de6a3c_4px)]";
const modes = ["Grab the whole screen", "Grab the current window", "Select area to grab"];

function ScreenshotDialog() {
  return (
    <section role="dialog" aria-labelledby="dlg" className={`${UI} absolute left-[709px] top-[336px] w-[390px] rounded-t-md bg-[#f2f1f0] text-sm leading-5 text-[#4c4c4c] shadow-[0_1px_4px_1px_rgba(0,0,0,0.5)]`}>
      <div className="flex h-7 items-center rounded-t-md bg-linear-to-b from-[#5a574e] to-[#3e3d39] px-[7px] pt-px">
        <button type="button" aria-label="Close" className="mr-1">
          <svg viewBox="0 0 16 16" className="size-4" aria-hidden="true"><circle cx="8" cy="8" r="7.500" fill="#ea5a2c" stroke="#35342f" /><path d="M5.500 5.500L10.500 10.500M10.500 5.500L5.500 10.500" stroke="#4c2010" strokeWidth="1.300" /></svg>
        </button>
        <button type="button" aria-label="Minimize" className="mr-[11px]">
          <svg viewBox="0 0 16 16" className="size-4" aria-hidden="true"><circle cx="8" cy="8" r="7.500" fill="#7d7b75" stroke="#35342f" /><path d="M4.500 8H11.500" stroke="#3a3935" strokeWidth="1.300" /></svg>
        </button>
        <h2 id="dlg" className="font-bold text-[#dfdbd2]">gnome-screenshot</h2>
      </div>
      <form className="px-2.5 pb-[11px] pt-[9px]">
        <h3 className="font-bold">Take Screenshot</h3>
        <div className="flex">
          <CameraArt className="ml-0.5 mt-11 h-[34px] w-11 shrink-0" />
          <div className="ml-3.5 flex-1 pt-[1px]">
            {modes.map((m, i) => (
              <label key={m} className="flex h-7 items-center gap-1.5 pl-[3px]">
                <input type="radio" name="mode" defaultChecked={i === 0} className={radio} />
                {m}
              </label>
            ))}
            <div className="mt-1 flex items-center justify-between">
              <label htmlFor="delay">Grab after a delay of</label>
              <span className="flex h-[27px] w-[102px] overflow-hidden rounded-[4px] border border-[#a9a6a1] bg-linear-to-b from-[#f7f7f7] to-white">
                <input id="delay" type="text" defaultValue="0" className="w-11 bg-transparent px-1.5 outline-none" />
                <button type="button" aria-label="Less" className="flex flex-1 items-center justify-center border-l border-[#dedcda]"><span className="h-px w-2.5 bg-[#888]" /></button>
                <button type="button" aria-label="More" className="flex flex-1 items-center justify-center border-l border-[#dedcda]">
                  <svg viewBox="0 0 10 10" className="size-2.5" stroke="#3c3c3c" strokeWidth="2" aria-hidden="true"><path d="M5 0V10M0 5H10" /></svg>
                </button>
              </span>
              <span>seconds</span>
            </div>
          </div>
        </div>
        <h3 className="mt-[18px] font-bold">Effects</h3>
        <label className="mt-px flex h-7 items-center gap-1.5 pl-[15px]">
          <input type="checkbox" className="size-4 appearance-none rounded-[3px] border border-[#a9a6a1] bg-white" />
          Include pointer
        </label>
        <label className="flex h-7 items-center gap-1.5 pl-[15px] text-[#979591]">
          <span className="relative flex size-4">
            <input type="checkbox" disabled defaultChecked className="size-4 appearance-none rounded-[3px] border border-[#c4c2bf] bg-[#ebebea]" />
            <svg viewBox="0 0 16 16" className="absolute inset-0 size-4" fill="none" stroke="#a3a19e" strokeWidth="2.500" aria-hidden="true"><path d="M3.500 8L6.500 11.500L12.500 3.500" /></svg>
          </span>
          Include the window border
        </label>
        <div className="mt-1 flex h-[31px] items-center pl-3 text-[#979591]">
          <label htmlFor="effect" className="w-[100px]">Apply effect:</label>
          <span className="relative">
            <select id="effect" disabled className="h-[31px] w-[125px] appearance-none rounded-[4px] border border-[#c4c2bf] bg-[#eeeeed] px-2 opacity-100">
              <option>None</option>
            </select>
            <svg viewBox="0 0 10 6" className="absolute right-2.5 top-[13px] h-1.5 w-2.5" fill="#979591" aria-hidden="true"><path d="M0 0H10L5 6Z" /></svg>
          </span>
        </div>
        <div className="mt-5 flex justify-end">
          <button type="button" className="h-[27px] w-[131px] rounded-[5px] border-[3px] border-[#dd7449] border-t-[#ec9c7c] bg-linear-to-b from-[#dedede] to-[#f0f0f0] leading-5">Take Screenshot</button>
        </div>
      </form>
    </section>
  );
}

export default function App() {
  return (
    <div className="relative flex min-h-screen flex-col overflow-hidden bg-white">
      <TopBar />
      <div className="flex flex-1">
        <aside className="flex w-[65px] shrink-0 flex-col justify-between border-r border-[#3a3564] bg-[#04133f] py-1.5">
          <ul className="flex flex-col gap-[7px]">
            {items.map((it) => <Tile key={it.name} item={it} />)}
          </ul>
          <ul>
            <Tile item={trash} />
          </ul>
        </aside>
        <div className="flex min-w-0 flex-1 flex-col">
          <BrowserChrome />
          <WebPage />
        </div>
      </div>
      <ScreenshotDialog />
    </div>
  );
}
